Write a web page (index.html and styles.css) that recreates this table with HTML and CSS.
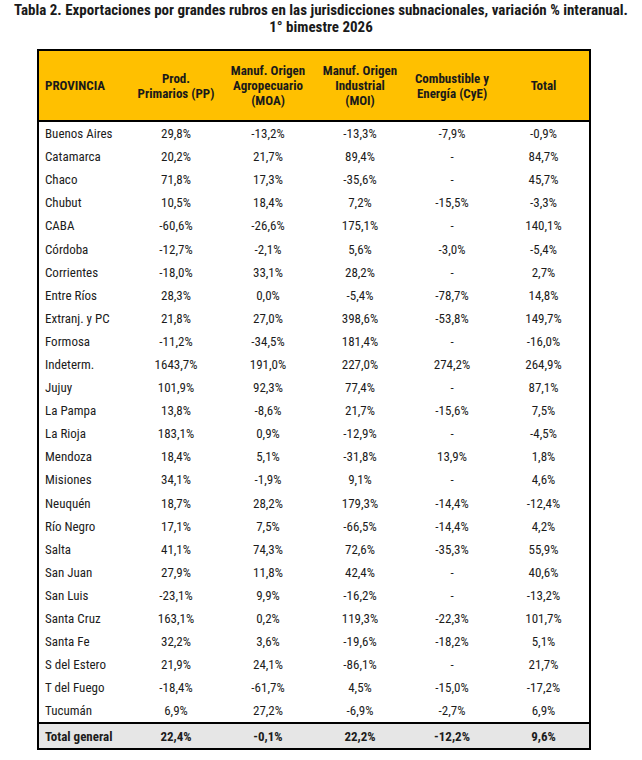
FILE: index.html
```html
<!DOCTYPE html>
<html lang="es">
<head>
<meta charset="utf-8">
<title>Tabla 2</title>
<link rel="stylesheet" href="styles.css">
</head>
<body>
<div class="page">
  <h1 class="title">Tabla 2. Exportaciones por grandes rubros en las jurisdicciones subnacionales, variación % interanual.<br>1° bimestre 2026</h1>
  <table class="data">
    <colgroup>
      <col class="c-prov"><col class="c-num"><col class="c-num"><col class="c-num"><col class="c-num"><col class="c-num">
    </colgroup>
    <thead>
      <tr>
        <th class="h-prov">PROVINCIA</th>
        <th>Prod.<br>Primarios (PP)</th>
        <th>Manuf. Origen<br>Agropecuario<br>(MOA)</th>
        <th>Manuf. Origen<br>Industrial<br>(MOI)</th>
        <th>Combustible y<br>Energía (CyE)</th>
        <th>Total</th>
      </tr>
    </thead>
    <tbody>
      <tr><td>Buenos Aires</td><td>29,8%</td><td>-13,2%</td><td>-13,3%</td><td>-7,9%</td><td>-0,9%</td></tr>
      <tr><td>Catamarca</td><td>20,2%</td><td>21,7%</td><td>89,4%</td><td>-</td><td>84,7%</td></tr>
      <tr><td>Chaco</td><td>71,8%</td><td>17,3%</td><td>-35,6%</td><td>-</td><td>45,7%</td></tr>
      <tr><td>Chubut</td><td>10,5%</td><td>18,4%</td><td>7,2%</td><td>-15,5%</td><td>-3,3%</td></tr>
      <tr><td>CABA</td><td>-60,6%</td><td>-26,6%</td><td>175,1%</td><td>-</td><td>140,1%</td></tr>
      <tr><td>Córdoba</td><td>-12,7%</td><td>-2,1%</td><td>5,6%</td><td>-3,0%</td><td>-5,4%</td></tr>
      <tr><td>Corrientes</td><td>-18,0%</td><td>33,1%</td><td>28,2%</td><td>-</td><td>2,7%</td></tr>
      <tr><td>Entre Ríos</td><td>28,3%</td><td>0,0%</td><td>-5,4%</td><td>-78,7%</td><td>14,8%</td></tr>
      <tr><td>Extranj. y PC</td><td>21,8%</td><td>27,0%</td><td>398,6%</td><td>-53,8%</td><td>149,7%</td></tr>
      <tr><td>Formosa</td><td>-11,2%</td><td>-34,5%</td><td>181,4%</td><td>-</td><td>-16,0%</td></tr>
      <tr><td>Indeterm.</td><td>1643,7%</td><td>191,0%</td><td>227,0%</td><td>274,2%</td><td>264,9%</td></tr>
      <tr><td>Jujuy</td><td>101,9%</td><td>92,3%</td><td>77,4%</td><td>-</td><td>87,1%</td></tr>
      <tr><td>La Pampa</td><td>13,8%</td><td>-8,6%</td><td>21,7%</td><td>-15,6%</td><td>7,5%</td></tr>
      <tr><td>La Rioja</td><td>183,1%</td><td>0,9%</td><td>-12,9%</td><td>-</td><td>-4,5%</td></tr>
      <tr><td>Mendoza</td><td>18,4%</td><td>5,1%</td><td>-31,8%</td><td>13,9%</td><td>1,8%</td></tr>
      <tr><td>Misiones</td><td>34,1%</td><td>-1,9%</td><td>9,1%</td><td>-</td><td>4,6%</td></tr>
      <tr><td>Neuquén</td><td>18,7%</td><td>28,2%</td><td>179,3%</td><td>-14,4%</td><td>-12,4%</td></tr>
      <tr><td>Río Negro</td><td>17,1%</td><td>7,5%</td><td>-66,5%</td><td>-14,4%</td><td>4,2%</td></tr>
      <tr><td>Salta</td><td>41,1%</td><td>74,3%</td><td>72,6%</td><td>-35,3%</td><td>55,9%</td></tr>
      <tr><td>San Juan</td><td>27,9%</td><td>11,8%</td><td>42,4%</td><td>-</td><td>40,6%</td></tr>
      <tr><td>San Luis</td><td>-23,1%</td><td>9,9%</td><td>-16,2%</td><td>-</td><td>-13,2%</td></tr>
      <tr><td>Santa Cruz</td><td>163,1%</td><td>0,2%</td><td>119,3%</td><td>-22,3%</td><td>101,7%</td></tr>
      <tr><td>Santa Fe</td><td>32,2%</td><td>3,6%</td><td>-19,6%</td><td>-18,2%</td><td>5,1%</td></tr>
      <tr><td>S del Estero</td><td>21,9%</td><td>24,1%</td><td>-86,1%</td><td>-</td><td>21,7%</td></tr>
      <tr><td>T del Fuego</td><td>-18,4%</td><td>-61,7%</td><td>4,5%</td><td>-15,0%</td><td>-17,2%</td></tr>
      <tr><td>Tucumán</td><td>6,9%</td><td>27,2%</td><td>-6,9%</td><td>-2,7%</td><td>6,9%</td></tr>
    </tbody>
    <tfoot>
      <tr><td>Total general</td><td>22,4%</td><td>-0,1%</td><td>22,2%</td><td>-12,2%</td><td>9,6%</td></tr>
    </tfoot>
  </table>
</div>
</body>
</html>
```
FILE: styles.css
```css
html, body {
  margin: 0;
  padding: 0;
  background: #ffffff;
}

body {
  font-family: "Liberation Sans Narrow", "Arial Narrow", "Roboto Condensed", "DejaVu Sans", sans-serif;
  font-stretch: condensed;
  color: #1c1c1c;
}

.page {
  width: 642px;
  padding-top: 2px;
}

.title {
  margin: 0;
  font-size: 15px;
  line-height: 17px;
  font-weight: bold;
  text-align: center;
  color: #1a1a1a;
}

.data {
  margin: 13px 0 0 37px;
  width: 552px;
  border-collapse: collapse;
  border: 2px solid #000;
  table-layout: fixed;
}

.c-prov { width: 92px; }
.c-num { width: 92px; }

.data thead th {
  background: #ffc000;
  height: 69px;
  padding: 0 2px;
  font-size: 13px;
  line-height: 15px;
  font-weight: bold;
  text-align: center;
  vertical-align: middle;
  border-bottom: 2px solid #000;
  color: #1a1a1a;
}

.data thead th.h-prov {
  text-align: left;
  padding-left: 6px;
}

.data td {
  height: 23.1px;
  padding: 0;
  font-size: 13px;
  text-align: center;
  vertical-align: middle;
}

.data td:first-child {
  text-align: left;
  padding-left: 6px;
}

.data tfoot td {
  background: #e6e6e6;
  border-top: 2px solid #000;
  height: 24px;
  font-weight: bold;
}
```
